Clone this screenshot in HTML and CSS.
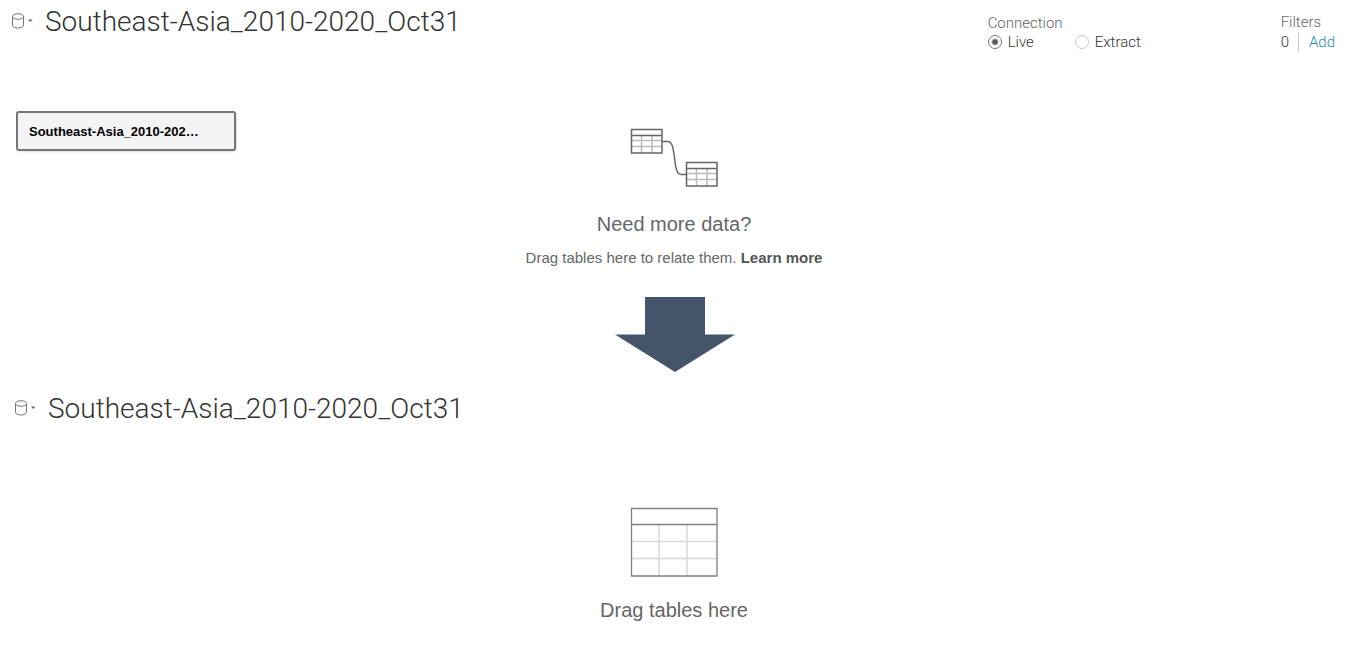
FILE: index.html
```html
<!DOCTYPE html>
<html lang="en">
<head>
<meta charset="utf-8">
<title>Southeast-Asia_2010-2020_Oct31</title>
<link rel="stylesheet" href="styles.css">
</head>
<body>
<main>
  <section class="source">
    <header class="bar">
      <button class="source-menu" type="button" aria-label="Data source menu">
        <svg width="22" height="18" viewBox="0 0 22 18" aria-hidden="true">
          <ellipse class="db" cx="7" cy="4.5" rx="5.5" ry="2.8"/>
          <path class="db" d="M1.5 4.5V13C1.5 17 12.5 17 12.5 13V4.5"/>
          <path class="caret" d="M17 7.5H21.500L19.200 10Z"/>
        </svg>
      </button>
      <h1 class="title">Southeast-Asia_2010-2020_Oct31</h1>
      <fieldset class="connection">
        <legend>Connection</legend>
        <div class="options">
          <label class="option"><input type="radio" name="connection" checked>Live</label>
          <label class="option"><input type="radio" name="connection">Extract</label>
        </div>
      </fieldset>
      <div class="filters">
        <div class="filters-label">Filters</div>
        <div class="filters-row"><span class="count">0</span><a class="add" href="#">Add</a></div>
      </div>
    </header>
    <div class="canvas">
      <button class="table-card" type="button">Southeast-Asia_2010-202…</button>
      <div class="hint">
        <svg class="relation" width="88" height="60" viewBox="0 0 88 60" aria-hidden="true">
          <g id="small-table">
            <path class="grid" d="M1 13.5H32M1 19.5H32M11.500 8V26M22 8V26"/>
            <path class="frame" d="M1.5 2.5H32V26H1.5ZM1 8.5H32"/>
          </g>
          <use href="#small-table" x="55" y="33"/>
          <path class="frame" d="M32 14.5H38C47 14.5 42 47.5 51 47.5H56"/>
        </svg>
        <h2 class="hint-title">Need more data?</h2>
        <p class="hint-text">Drag tables here to relate them. <a href="#">Learn more</a></p>
      </div>
    </div>
  </section>

  <svg class="arrow" width="120" height="76" viewBox="0 0 120 76" aria-hidden="true">
    <path d="M30 0H90V37.5H120L60 75L0 37.5H30Z"/>
  </svg>

  <section class="source source-empty">
    <header class="bar">
      <button class="source-menu" type="button" aria-label="Data source menu">
        <svg width="22" height="18" viewBox="0 0 22 18" aria-hidden="true">
          <ellipse class="db" cx="7" cy="4.5" rx="5.5" ry="2.8"/>
          <path class="db" d="M1.5 4.5V13C1.5 17 12.5 17 12.5 13V4.5"/>
          <path class="caret" d="M17 7.5H21.500L19.200 10Z"/>
        </svg>
      </button>
      <h1 class="title">Southeast-Asia_2010-2020_Oct31</h1>
    </header>
    <div class="canvas">
      <div class="hint">
        <svg class="big-table" width="88" height="70" viewBox="0 0 88 70" aria-hidden="true">
          <path class="grid-light" d="M1 34.5H87M1 51.5H87M29 18V69M57 18V69"/>
          <path class="frame-thin" d="M1.5 1.5H87V69H1.5Z"/>
          <path class="frame-thin" d="M1 17.5H87"/>
        </svg>
        <h2 class="hint-title">Drag tables here</h2>
      </div>
    </div>
  </section>
</main>
</body>
</html>
```
FILE: styles.css
```css
* {
  box-sizing: border-box;
}

body {
  margin: 0;
  background: #fff;
  color: #333;
  font-family: Roboto, "Liberation Sans", sans-serif;
}

h1, h2, p {
  margin: 0;
}

button {
  font: inherit;
  cursor: pointer;
}

.bar {
  display: flex;
  align-items: flex-start;
  min-height: 56px;
  padding: 4px 15px 0 11px;
}

.source-menu {
  display: flex;
  margin-top: 8px;
  padding: 0;
  border: 0;
  background: none;
}

.db {
  fill: none;
  stroke: #777;
  stroke-width: 1;
}

.caret {
  fill: #666;
}

.title {
  flex: 1;
  margin-left: 12px;
  font-size: 28px;
  font-weight: 300;
  line-height: 36px;
}

.connection {
  width: 293px;
  margin: 10px 0 0;
  padding: 0;
  border: 0;
  font-size: 15px;
  font-weight: 300;
  line-height: 19px;
}

.connection legend {
  padding: 0;
  color: #666;
}

.options {
  display: flex;
  gap: 41px;
}

.option {
  display: flex;
  align-items: center;
  gap: 6px;
}

.option input {
  appearance: none;
  width: 14px;
  height: 14px;
  margin: 0 0 2px;
  border: 1px solid #ccc;
  border-radius: 50%;
}

.option input:checked {
  border-color: #777;
  background: radial-gradient(circle, #555 0 2px, transparent 4px);
}

.filters {
  margin-top: 8px;
  font-size: 15px;
  font-weight: 300;
  line-height: 20px;
}

.filters-label {
  color: #666;
}

.filters-row {
  display: flex;
}

.count {
  padding-right: 9px;
  border-right: 1px solid #ccc;
}

.add {
  padding-left: 10px;
  color: #1f8fb4;
  text-decoration: none;
}

.canvas {
  display: grid;
  grid-template-columns: 1fr auto 1fr;
  align-items: start;
  padding: 54px 18px 0 16px;
}

.table-card {
  width: 220px;
  height: 40px;
  margin-top: 1px;
  padding: 0 11px;
  border: 2px solid #777;
  border-radius: 3px;
  background: #f4f4f4;
  box-shadow: 1px 1px 2px #ddd;
  color: #000;
  font-family: "Liberation Sans", Arial, sans-serif;
  font-size: 13px;
  font-weight: 700;
  text-align: left;
}

.hint {
  display: flex;
  flex-direction: column;
  grid-column: 2;
  align-items: center;
  padding-top: 17px;
  color: #666;
  font-family: "Liberation Sans", Arial, sans-serif;
}

.grid {
  fill: none;
  stroke: #bbb;
  stroke-width: 1.5;
}

.frame {
  fill: none;
  stroke: #666;
  stroke-width: 1.5;
}

.grid-light {
  fill: none;
  stroke: #d8d8d8;
  stroke-width: 1.5;
}

.frame-thin {
  fill: none;
  stroke: #808080;
  stroke-width: 1.3;
}

.hint-title {
  margin-top: 23px;
  font-size: 20px;
  font-weight: 400;
  line-height: 28px;
}

.hint-text {
  margin-top: 10px;
  font-size: 15px;
  line-height: 20px;
}

.hint-text a {
  color: #555;
  font-weight: 700;
  text-decoration: none;
}

.arrow {
  display: block;
  margin: 29px auto 14px;
  fill: #44546a;
}

.source-empty .bar {
  padding-left: 14px;
}

.source-empty .hint {
  padding-top: 10px;
}

.source-empty .hint-title {
  margin-top: 19px;
}
```
